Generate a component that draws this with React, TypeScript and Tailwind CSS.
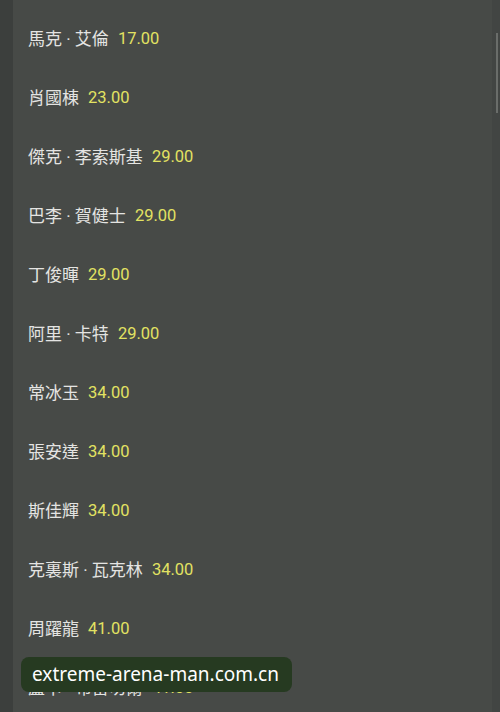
const rows: { name: string; price: string }[] = [
  { name: "馬克 · 艾倫", price: "17.00" },
  { name: "肖國棟", price: "23.00" },
  { name: "傑克 · 李索斯基", price: "29.00" },
  { name: "巴李 · 賀健士", price: "29.00" },
  { name: "丁俊暉", price: "29.00" },
  { name: "阿里 · 卡特", price: "29.00" },
  { name: "常冰玉", price: "34.00" },
  { name: "張安達", price: "34.00" },
  { name: "斯佳輝", price: "34.00" },
  { name: "克裏斯 · 瓦克林", price: "34.00" },
  { name: "周躍龍", price: "41.00" },
  { name: "盧卡 · 布雷切爾", price: "41.00" },
];

export default function App() {
  return (
    <div
      className="relative w-[500px] h-[712px] overflow-hidden bg-[#474a47] flex"
      style={{ fontFamily: "Roboto, 'Noto Sans CJK TC', sans-serif" }}
    >
      {/* left dark strip */}
      <div className="w-[13px] shrink-0 bg-[#3c3f3d]" />

      {/* list */}
      <div className="flex-1 flex flex-col pt-[10px] pl-[15px]">
        {rows.map((r) => (
          <div key={r.name} className="h-[59px] shrink-0 flex items-center gap-[9px]">
            <span className="text-[#e4e4e2] text-[17px]">{r.name}</span>
            <span className="text-[#e2e262] text-[16.5px]">{r.price}</span>
          </div>
        ))}
      </div>

      {/* right edge with scrollbar */}
      <div className="w-[8px] shrink-0 bg-[#424543] relative">
        <div className="absolute left-[4px] top-[33px] w-[2px] h-[80px] bg-[#6a6d6a]" />
      </div>

      {/* watermark */}
      <div className="absolute left-[21px] top-[657px] w-[271px] h-[35px] rounded-[8px] bg-[#263a21] flex items-center pl-[11px]">
        <span
          className="text-white text-[19px] leading-none"
          style={{ fontFamily: "'Noto Sans', sans-serif" }}
        >
          extreme-arena-man.com.cn
        </span>
      </div>
    </div>
  );
}
